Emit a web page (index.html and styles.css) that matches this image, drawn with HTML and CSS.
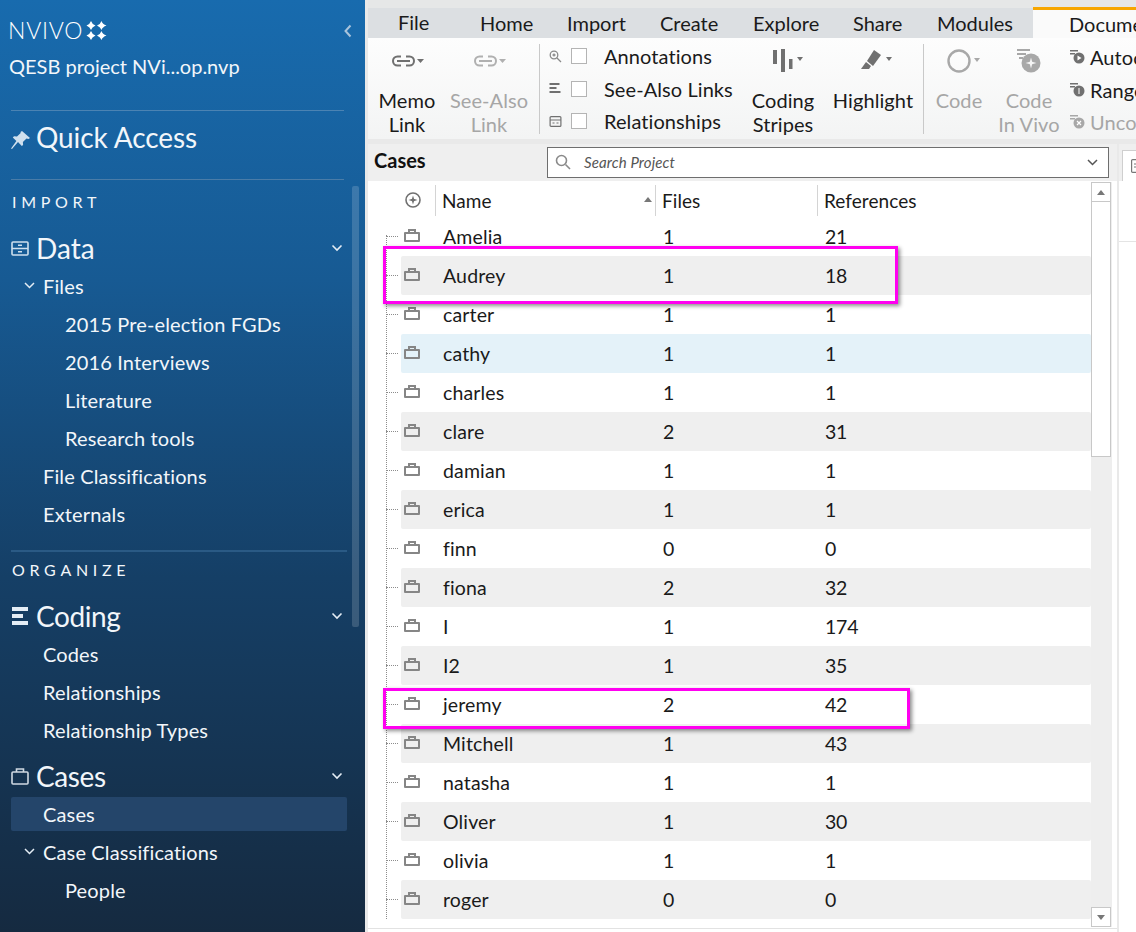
FILE: index.html
```html
<!DOCTYPE html>
<html lang="en">
<head>
    <meta charset="UTF-8">
    <title>NVivo - Cases</title>
    <link rel="stylesheet" href="styles.css">
</head>
<body>
    <div class="app">
        <aside class="sidebar">
            <div class="brand">
                <span class="logo-text">NVIVO</span>
                <svg class="logo-mark" width="21" height="19" viewBox="0 0 21 19" fill="#fff">
                    <path d="M5 0 Q5.900 3 9.500 4.500 Q5.900 6 5 9 Q4.100 6 .5 4.500 Q4.100 3 5 0Z"/>
                    <path d="M15.500 0 Q16.400 3 20.500 4.500 Q16.400 6 15.500 9 Q14.600 6 11 4.500 Q14.600 3 15.500 0Z"/>
                    <path d="M5 10 Q5.900 13 9.500 14.500 Q5.900 16 5 19 Q4.100 16 .5 14.500 Q4.100 13 5 10Z"/>
                    <path d="M15.500 10 Q16.400 13 20.500 14.500 Q16.400 16 15.500 19 Q14.600 16 11 14.500 Q14.600 13 15.500 10Z"/>
                </svg>
                <svg class="collapse" width="8" height="14" viewBox="0 0 8 14" fill="none" stroke="#a9c4dc" stroke-width="2"><path d="M6.500 1.500 1.500 7l5 5.500"/></svg>
            </div>
            <div class="project">QESB project NVi...op.nvp</div>
            <div class="quick">
                <svg width="19" height="18" viewBox="0 0 19 18" fill="#cfe0ee"><path d="M11 0l8 7-1.500 1-2-.6-3.600 3.600.2 3-1.300 1.100L7 11 1 18l-1-.6L5.400 10 1.800 6.400 3 5.200l3 .3 3.700-3.400-.2-1.100z"/></svg>
                <span>Quick Access</span>
            </div>
            <div class="nav-scroll">
                <div class="section-label import">IMPORT</div>
                <div class="nav-head">
                    <svg width="18" height="15" viewBox="0 0 18 15" fill="none" stroke="#cfe0ee" stroke-width="1.600"><rect x="1" y="1" width="16" height="13" rx="1"/><path d="M1 7.500h16M7 4.300h4M7 10.800h4"/></svg>
                    <span>Data</span>
                    <svg class="chev" width="12" height="8" viewBox="0 0 12 8" fill="none" stroke="#e4edf5" stroke-width="1.600"><path d="M1.500 1.500 6 6l4.500-4.500"/></svg>
                </div>
                <div class="nav-item lvl1">
                    <svg class="sub-chev" width="11" height="7" viewBox="0 0 11 7" fill="none" stroke="#e4edf5" stroke-width="1.500"><path d="M1 1l4.500 4.500L10 1"/></svg>Files
                </div>
                <div class="nav-item lvl2">2015 Pre-election FGDs</div>
                <div class="nav-item lvl2">2016 Interviews</div>
                <div class="nav-item lvl2">Literature</div>
                <div class="nav-item lvl2">Research tools</div>
                <div class="nav-item lvl1">File Classifications</div>
                <div class="nav-item lvl1">Externals</div>
                <div class="nav-rule"></div>
                <div class="section-label">ORGANIZE</div>
                <div class="nav-head tight">
                    <svg width="18" height="18" viewBox="0 0 18 18" fill="#e4edf5"><rect x="1" y="0" width="16" height="4"/><rect x="1" y="7" width="11" height="4"/><rect x="1" y="14" width="16" height="4"/></svg>
                    <span>Coding</span>
                    <svg class="chev" width="12" height="8" viewBox="0 0 12 8" fill="none" stroke="#e4edf5" stroke-width="1.600"><path d="M1.500 1.500 6 6l4.500-4.500"/></svg>
                </div>
                <div class="nav-item lvl1">Codes</div>
                <div class="nav-item lvl1">Relationships</div>
                <div class="nav-item lvl1">Relationship Types</div>
                <div class="nav-head tight cases-head">
                    <svg width="18" height="17" viewBox="0 0 18 17" fill="none" stroke="#cfd9e2" stroke-width="1.600"><rect x="1" y="4" width="16" height="12" rx="1"/><path d="M5.500 4V1h7v3"/></svg>
                    <span>Cases</span>
                    <svg class="chev" width="12" height="8" viewBox="0 0 12 8" fill="none" stroke="#e4edf5" stroke-width="1.600"><path d="M1.500 1.500 6 6l4.500-4.500"/></svg>
                </div>
                <div class="nav-item lvl1 selected">Cases</div>
                <div class="nav-item lvl1">
                    <svg class="sub-chev" width="11" height="7" viewBox="0 0 11 7" fill="none" stroke="#e4edf5" stroke-width="1.500"><path d="M1 1l4.500 4.500L10 1"/></svg>Case Classifications
                </div>
                <div class="nav-item lvl2">People</div>
            </div>
            <div class="side-thumb"></div>
        </aside>

        <main class="main">
            <div class="top-strip"></div>
            <nav class="tabs">
                <span class="tab tab-file">File</span>
                <span class="tab tab-home">Home</span>
                <span class="tab tab-import">Import</span>
                <span class="tab tab-create">Create</span>
                <span class="tab tab-explore">Explore</span>
                <span class="tab tab-share">Share</span>
                <span class="tab tab-modules">Modules</span>
                <span class="tab tab-active">Document</span>
            </nav>
            <div class="ribbon">
                <div class="rb-btn memo">
                    <span class="rb-icon"><svg width="33" height="14" viewBox="0 0 33 14" fill="none" stroke="#707070" stroke-width="2"><path d="M10 2.500H6.500a4.500 4.500 0 0 0 0 9H10M15 2.500h3.500a4.500 4.500 0 0 1 0 9H15M6 7h13"/><path d="M26 5h7l-3.500 4z" fill="#707070" stroke="none"/></svg></span>
                    <span class="rb-label">Memo<br>Link</span>
                </div>
                <div class="rb-btn seealso off">
                    <span class="rb-icon"><svg width="33" height="14" viewBox="0 0 33 14" fill="none" stroke="#b0b0b0" stroke-width="2"><path d="M10 2.500H6.500a4.500 4.500 0 0 0 0 9H10M15 2.500h3.500a4.500 4.500 0 0 1 0 9H15M6 7h13"/><path d="M26 5h7l-3.500 4z" fill="#b0b0b0" stroke="none"/></svg></span>
                    <span class="rb-label">See-Also<br>Link</span>
                </div>
                <div class="rb-sep"></div>
                <div class="checks">
                    <div class="check-row">
                        <svg width="13" height="13" viewBox="0 0 13 13" fill="none" stroke="#8a8a8a" stroke-width="1.300"><circle cx="5" cy="5" r="3.800"/><path d="M8 8l4 4M3.500 5h3M5 3.500v3"/></svg>
                        <span class="box"></span><span>Annotations</span>
                    </div>
                    <div class="check-row">
                        <svg width="12" height="11" viewBox="0 0 12 11" fill="#707070"><rect width="10" height="2"/><rect y="4" width="7" height="2"/><rect y="8" width="11" height="2"/></svg>
                        <span class="box"></span><span>See-Also Links</span>
                    </div>
                    <div class="check-row">
                        <svg width="12" height="11" viewBox="0 0 12 11" fill="none" stroke="#707070" stroke-width="1.200"><rect x=".6" y=".6" width="10.800" height="9.800" rx="1"/><path d="M.6 4h10.800M3 7h2M7 7h2"/></svg>
                        <span class="box"></span><span>Relationships</span>
                    </div>
                </div>
                <div class="rb-btn coding">
                    <span class="rb-icon"><svg class="ico-coding" width="30" height="24" viewBox="0 0 30 24" fill="#707070"><rect x="0" y="1" width="4" height="14"/><rect x="8" y="0" width="4" height="23"/><rect x="16" y="10" width="3.500" height="10"/><path d="M24 8h6l-3 4z"/></svg></span>
                    <span class="rb-label">Coding<br>Stripes</span>
                </div>
                <div class="rb-btn highlight">
                    <span class="rb-icon"><svg class="ico-highlight" width="32" height="22" viewBox="0 0 32 22" fill="#707070"><path d="M13 0l7 5-8 11-6-5z"/><path d="M5 12l5 4-2 3H0z"/><path d="M25 7h6l-3 4z"/></svg></span>
                    <span class="rb-label">Highlight</span>
                </div>
                <div class="rb-sep sep2"></div>
                <div class="rb-btn code off">
                    <span class="rb-icon"><svg class="ico-code" width="33" height="24" viewBox="0 0 33 24" fill="none" stroke="#a8a8a8" stroke-width="2.400"><circle cx="12" cy="12" r="10.500"/><path d="M27 9h6l-3 4z" fill="#a8a8a8" stroke="none"/></svg></span>
                    <span class="rb-label">Code</span>
                </div>
                <div class="rb-btn invivo off">
                    <span class="rb-icon"><svg width="24" height="24" viewBox="0 0 24 24" fill="#a8a8a8"><rect x="0" y="0" width="13" height="2"/><rect x="0" y="4" width="9" height="2"/><rect x="2" y="8" width="4" height="2"/><circle cx="14" cy="14" r="9.500"/><path d="M14 8.500 15.500 14 14 19.500 12.500 14z" fill="#f5f5f5"/><path d="M8.500 14 14 12.500 19.500 14 14 15.500z" fill="#f5f5f5"/></svg></span>
                    <span class="rb-label">Code<br>In Vivo</span>
                </div>
                <div class="auto-list">
                    <div class="auto-row"><svg width="15" height="14" viewBox="0 0 15 14" fill="#707070"><rect width="8" height="1.500"/><rect y="3" width="5" height="1.500"/><circle cx="9" cy="8" r="5.500"/><path d="M7.500 5.500 11.500 8l-4 2.500z" fill="#fff"/></svg><span>Autocode</span></div>
                    <div class="auto-row"><svg width="15" height="14" viewBox="0 0 15 14" fill="#707070"><rect width="8" height="1.500"/><rect y="3" width="5" height="1.500"/><circle cx="9" cy="8" r="5.500"/><path d="M8.500 5h1v6h-1z" fill="#fff"/></svg><span>Range Code</span></div>
                    <div class="auto-row off"><svg width="15" height="14" viewBox="0 0 15 14" fill="#a8a8a8"><rect width="8" height="1.500"/><rect y="3" width="5" height="1.500"/><circle cx="9" cy="8" r="5.500"/><path d="M7 6l4 4M11 6l-4 4" stroke="#fff" stroke-width="1.200"/></svg><span>Uncode</span></div>
                </div>
            </div>

            <div class="workspace">
                <section class="list-pane">
                    <div class="pane-bar">
                        <h2>Cases</h2>
                        <div class="search">
                            <svg width="16" height="16" viewBox="0 0 16 16" fill="none" stroke="#8a8a8a" stroke-width="1.600"><circle cx="6.500" cy="6.500" r="5"/><path d="M10.500 10.500 15 15"/></svg>
                            <span>Search Project</span>
                            <svg class="search-arrow" width="11" height="7" viewBox="0 0 11 7" fill="none" stroke="#555" stroke-width="1.500"><path d="M1 1l4.500 4.500L10 1"/></svg>
                        </div>
                    </div>
                    <div class="grid-wrap">
                        <div class="grid">
                            <div class="grid-head">
                                <span class="col-add"><svg width="16" height="16" viewBox="0 0 16 16" fill="none" stroke="#707070" stroke-width="1.600"><circle cx="8" cy="8" r="7"/><path d="M8 3.500 9.400 8 8 12.500 6.600 8zM3.500 8l4.500-1.400L12.500 8 8 9.400z" fill="#707070" stroke="none"/></svg></span>
                                <span class="col-name">Name<i class="sort"></i></span>
                                <span class="col-files">Files</span>
                                <span class="col-refs">References</span>
                            </div>
                            <div class="rows">
                                <div class="row"><span class="case-ico"></span><span class="c-name">Amelia</span><span class="c-files">1</span><span class="c-refs">21</span></div>
                                <div class="row alt"><span class="case-ico"></span><span class="c-name">Audrey</span><span class="c-files">1</span><span class="c-refs">18</span></div>
                                <div class="row"><span class="case-ico"></span><span class="c-name">carter</span><span class="c-files">1</span><span class="c-refs">1</span></div>
                                <div class="row hover"><span class="case-ico"></span><span class="c-name">cathy</span><span class="c-files">1</span><span class="c-refs">1</span></div>
                                <div class="row"><span class="case-ico"></span><span class="c-name">charles</span><span class="c-files">1</span><span class="c-refs">1</span></div>
                                <div class="row alt"><span class="case-ico"></span><span class="c-name">clare</span><span class="c-files">2</span><span class="c-refs">31</span></div>
                                <div class="row"><span class="case-ico"></span><span class="c-name">damian</span><span class="c-files">1</span><span class="c-refs">1</span></div>
                                <div class="row alt"><span class="case-ico"></span><span class="c-name">erica</span><span class="c-files">1</span><span class="c-refs">1</span></div>
                                <div class="row"><span class="case-ico"></span><span class="c-name">finn</span><span class="c-files">0</span><span class="c-refs">0</span></div>
                                <div class="row alt"><span class="case-ico"></span><span class="c-name">fiona</span><span class="c-files">2</span><span class="c-refs">32</span></div>
                                <div class="row"><span class="case-ico"></span><span class="c-name">I</span><span class="c-files">1</span><span class="c-refs">174</span></div>
                                <div class="row alt"><span class="case-ico"></span><span class="c-name">I2</span><span class="c-files">1</span><span class="c-refs">35</span></div>
                                <div class="row"><span class="case-ico"></span><span class="c-name">jeremy</span><span class="c-files">2</span><span class="c-refs">42</span></div>
                                <div class="row alt"><span class="case-ico"></span><span class="c-name">Mitchell</span><span class="c-files">1</span><span class="c-refs">43</span></div>
                                <div class="row"><span class="case-ico"></span><span class="c-name">natasha</span><span class="c-files">1</span><span class="c-refs">1</span></div>
                                <div class="row alt"><span class="case-ico"></span><span class="c-name">Oliver</span><span class="c-files">1</span><span class="c-refs">30</span></div>
                                <div class="row"><span class="case-ico"></span><span class="c-name">olivia</span><span class="c-files">1</span><span class="c-refs">1</span></div>
                                <div class="row alt"><span class="case-ico"></span><span class="c-name">roger</span><span class="c-files">0</span><span class="c-refs">0</span></div>
                            </div>
                        </div>
                        <div class="vscroll">
                            <div class="vs-btn up"><i></i></div>
                            <div class="vs-thumb"></div>
                            <div class="vs-track"></div>
                            <div class="vs-btn down"><i></i></div>
                        </div>
                    </div>
                </section>
                <section class="detail-pane">
                    <div class="detail-bar">
                        <div class="detail-tab">
                            <svg width="10" height="14" viewBox="0 0 10 14" fill="none" stroke="#777" stroke-width="1.200"><rect x=".6" y=".6" width="12" height="12.800" rx="1"/><path d="M3 5h6M3 8h6"/></svg>
                        </div>
                    </div>
                    <div class="detail-rule"></div>
                </section>
            </div>
            <div class="mark mark-audrey"></div>
            <div class="mark mark-jeremy"></div>
        </main>
    </div>
</body>
</html>
```

FILE: styles.css
```css
*, *::before, *::after {
    box-sizing: border-box;
}
html, body {
    margin: 0;
    padding: 0;
    height: 100%;
    overflow: hidden;
}
body {
    font-family: 'Lato', 'Liberation Sans', sans-serif;
    font-variant-ligatures: none;
    color: #1a1a1a;
    background: #fff;
}
.app {
    display: flex;
    width: 1136px;
    height: 932px;
    overflow: hidden;
}

/* left navigation */
.sidebar {
    position: relative;
    width: 365px;
    flex: none;
    padding: 0 18px 0 11px;
    color: #f2f6fa;
    background: linear-gradient(180deg, #186bae 0%, #175a93 30%, #153f66 62%, #152a40 100%);
}
.brand {
    display: flex;
    align-items: center;
    height: 19px;
    margin: 21px -7px 0 -3px;
}
.logo-text {
    font-size: 23px;
    font-weight: 300;
    line-height: 19px;
    letter-spacing: 0.8px;
    color: #fff;
    width: 77px;
}
.logo-mark {
    margin-left: 1px;
}
.collapse {
    margin-left: auto;
    margin-right: 2px;
}
.project {
    font-size: 20px;
    line-height: 26px;
    margin: 13px 0 0 -2px;
    height: 57px;
}
.quick {
    display: flex;
    align-items: center;
    gap: 6px;
    height: 70px;
    width: 333px;
    padding-bottom: 16px;
    border-top: 1px solid #4b83b3;
    border-bottom: 1px solid #4a7ca8;
    font-size: 28px;
    letter-spacing: -0.1px;
}
.quick svg {
    margin-top: 6px;
}
.section-label {
    font-size: 16px;
    line-height: 20px;
    letter-spacing: 4.7px;
    padding-left: 1px;
    margin-top: 8px;
}
.section-label.import {
    margin-top: 12px;
}
.nav-head {
    display: flex;
    align-items: center;
    gap: 7px;
    height: 38px;
    margin-top: 8px;
    font-size: 28px;
}
.section-label + .nav-head {
    margin-top: 17px;
}
.nav-head.cases-head {
    margin-top: 8px;
}
.tight span {
    letter-spacing: -0.4px;
}
.chev {
    margin-left: auto;
    margin-right: 4px;
}
.nav-item {
    position: relative;
    display: flex;
    align-items: center;
    height: 38px;
    font-size: 20px;
    letter-spacing: 0.14px;
}
.lvl1 {
    padding-left: 32px;
}
.lvl2 {
    padding-left: 54px;
}
.sub-chev {
    position: absolute;
    left: 13px;
    top: 15px;
}
.nav-item.selected {
    height: 34px;
    margin: 2px 0;
    border-radius: 2px;
    background: #24456a;
}
.nav-rule {
    height: 2px;
    margin-top: 17px;
    background: #2a5a85;
}
.side-thumb {
    position: absolute;
    left: 352px;
    top: 186px;
    width: 7px;
    height: 441px;
    border-radius: 2px;
    background: rgba(255, 255, 255, 0.16);
}

/* ribbon */
.main {
    position: relative;
    flex: 1;
    min-width: 0;
    background: #e9e9e9;
    padding-left: 3px;
}
.top-strip {
    height: 8px;
    background: #e6e7e7;
}
.tabs {
    position: relative;
    height: 30px;
    background: #dcdfe2;
    font-size: 20px;
    line-height: 30px;
}
.tab {
    position: absolute;
    top: 0;
}
.tab-file { left: 30px; top: -1px; }
.tab-home { left: 112px; }
.tab-import { left: 199px; }
.tab-create { left: 292px; }
.tab-explore { left: 385px; }
.tab-share { left: 485px; }
.tab-modules { left: 569px; }
.tab-active {
    left: 665px;
    top: -1px;
    width: 200px;
    height: 31px;
    padding-left: 36px;
    border-top: 3px solid #f7a600;
    background: #fafafa;
    line-height: 28px;
}
.ribbon {
    display: flex;
    height: 101px;
    overflow: hidden;
    background: linear-gradient(180deg, #fdfdfd 0%, #f3f4f4 100%);
    font-size: 20px;
    letter-spacing: 0.08px;
}
.rb-btn {
    display: flex;
    flex-direction: column;
    align-items: center;
    flex: none;
    text-align: center;
}
.rb-icon {
    display: flex;
    align-items: center;
    justify-content: center;
    height: 46px;
}
.rb-label {
    line-height: 24px;
    margin-top: 4px;
}
.off {
    color: #a6a6a6;
}
.memo {
    width: 82px;
    margin-left: -2px;
}
.seealso {
    width: 82px;
}
.rb-sep {
    width: 1px;
    height: 90px;
    margin: 6px 0 0 9px;
    flex: none;
    background: #c9c9c9;
}
.checks {
    width: 213px;
    flex: none;
    padding: 2px 0 0 9px;
}
.check-row {
    display: flex;
    align-items: center;
    height: 32.500px;
}
.check-row svg {
    width: 13px;
    margin-right: 9px;
}
.box {
    width: 16px;
    height: 16px;
    margin-right: 17px;
    border: 1px solid #b4b4b4;
    background: #fff;
}
.coding {
    width: 64px;
    margin-left: -2px;
}
.ico-coding {
    margin-left: 10px;
}
.highlight {
    width: 90px;
    margin-left: 13px;
}
.ico-highlight {
    margin-left: 8px;
}
.sep2 {
    margin-left: 5px;
}
.code {
    width: 70px;
}
.ico-code {
    margin-left: 8px;
}
.invivo {
    width: 70px;
}
.auto-list {
    flex: none;
    width: 140px;
    margin-left: 6px;
    padding-top: 3px;
    white-space: nowrap;
}
.auto-row {
    display: flex;
    align-items: center;
    gap: 5px;
    height: 32.500px;
}
.auto-row svg {
    flex: none;
}

/* workspace */
.workspace {
    display: flex;
    height: 793px;
    margin-top: 5px;
}
.list-pane {
    width: 749px;
    flex: none;
    background: #fff;
}
.pane-bar {
    display: flex;
    align-items: center;
    height: 37px;
    padding: 0 8px 0 6px;
    background: #efefef;
}
.pane-bar h2 {
    width: 173px;
    flex: none;
    margin: -5px 0 0;
    font-size: 20px;
    font-weight: 700;
    color: #111;
}
.search {
    display: flex;
    align-items: center;
    gap: 13px;
    height: 31px;
    flex: 1;
    margin-top: -1px;
    padding: 0 10px 0 7px;
    border: 1px solid #6e6e6e;
    background: #fff;
    font-size: 15px;
    font-style: italic;
    letter-spacing: 0.12px;
    color: #555;
}
.search-arrow {
    margin-left: auto;
}
.grid-wrap {
    display: flex;
    height: 748px;
    position: relative;
    border-bottom: 1px solid #e2e2e2;
}
.grid {
    width: 723px;
    flex: none;
    overflow: hidden;
}
.grid-head {
    display: flex;
    align-items: center;
    height: 38px;
    font-size: 19px;
    letter-spacing: 0.06px;
}
.grid-head > span {
    display: flex;
    align-items: center;
    height: 31px;
}
.col-add {
    width: 68px;
    padding-left: 37px;
    border-right: 1px solid #d4d4d4;
}
.col-name {
    position: relative;
    width: 220px;
    padding-left: 6px;
    border-right: 1px solid #d4d4d4;
}
.sort {
    position: absolute;
    right: 3px;
    top: 12px;
    width: 0;
    height: 0;
    border-left: 4.500px solid transparent;
    border-right: 4.500px solid transparent;
    border-bottom: 5px solid #777;
}
.col-files {
    width: 162px;
    padding-left: 6px;
    border-right: 1px solid #d4d4d4;
}
.col-refs {
    padding-left: 6px;
    flex: 1;
}
.rows {
    position: relative;
    margin-top: -2px;
    padding-left: 33px;
    font-size: 19.500px;
}
.rows::before {
    content: "";
    position: absolute;
    left: 18px;
    top: 18px;
    bottom: 0;
    border-left: 1px dotted #8c8c8c;
}
.row {
    position: relative;
    display: flex;
    align-items: center;
    height: 39px;
    border-radius: 2px;
}
.row::before {
    content: "";
    position: absolute;
    left: -15px;
    top: 19px;
    width: 12px;
    border-top: 1px dotted #8c8c8c;
}
.row.alt {
    background: #efefef;
}
.row.hover {
    background: #e4f2f9;
}
.case-ico {
    position: relative;
    width: 16px;
    height: 10px;
    margin: 1px 23px 0 3px;
    flex: none;
    border: 2px solid #868686;
    border-radius: 1px;
}
.case-ico::before {
    content: "";
    position: absolute;
    left: 2px;
    top: -5px;
    width: 8px;
    height: 4px;
    border: 2px solid #868686;
    border-bottom: 0;
}
.c-name {
    width: 220px;
    flex: none;
    letter-spacing: 0.15px;
}
.c-files {
    width: 162px;
    flex: none;
}
.c-refs {
    letter-spacing: -0.2px;
}
.vscroll {
    width: 21px;
    flex: none;
    display: flex;
    flex-direction: column;
    margin: 1px 0 1px;
    background: #eeeeee;
}
.vs-btn {
    display: flex;
    align-items: center;
    justify-content: center;
    flex: none;
    width: 20px;
    height: 20px;
    background: #fff;
    border: 1px solid #c8c8c8;
}
.vs-btn i {
    width: 0;
    height: 0;
    border-left: 4px solid transparent;
    border-right: 4px solid transparent;
}
.up i {
    border-bottom: 5px solid #777;
}
.down i {
    border-top: 5px solid #777;
}
.vs-thumb {
    width: 20px;
    height: 255px;
    flex: none;
    background: #fff;
    border-right: 1px solid #c8c8c8;
    border-left: 1px solid #c8c8c8;
    border-bottom: 1px solid #c8c8c8;
}
.vs-track {
    flex: 1;
}

.detail-pane {
    flex: 1;
    margin-left: 2px;
    background: #fff;
}
.detail-bar {
    height: 37px;
    padding: 6px 0 0 3px;
    background: #efefef;
    overflow: hidden;
}
.detail-tab {
    height: 31px;
    margin-right: -10px;
    padding: 6px 0 0 8px;
    border: 1px solid #cfcfcf;
    border-bottom: 0;
    background: #fff;
}
.detail-rule {
    height: 1px;
    margin-top: 60px;
    background: #e4e4e4;
}

/* review highlights drawn over the grid */
.mark {
    position: absolute;
    border: 3px solid #ff00f0;
    box-shadow: 2px 2px 4px rgba(0, 0, 0, 0.45);
}
.mark-audrey {
    left: 18px;
    top: 246px;
    width: 515px;
    height: 58px;
}
.mark-jeremy {
    left: 18px;
    top: 688px;
    width: 527px;
    height: 41px;
}
```
